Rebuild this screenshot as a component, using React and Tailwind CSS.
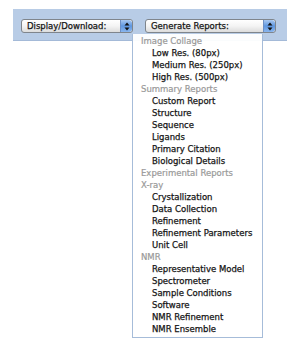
import React from "react";

const menu = [
  { label: "Image Collage", header: true },
  { label: "Low Res. (80px)" },
  { label: "Medium Res. (250px)" },
  { label: "High Res. (500px)" },
  { label: "Summary Reports", header: true },
  { label: "Custom Report" },
  { label: "Structure" },
  { label: "Sequence" },
  { label: "Ligands" },
  { label: "Primary Citation" },
  { label: "Biological Details" },
  { label: "Experimental Reports", header: true },
  { label: "X-ray", header: true },
  { label: "Crystallization" },
  { label: "Data Collection" },
  { label: "Refinement" },
  { label: "Refinement Parameters" },
  { label: "Unit Cell" },
  { label: "NMR", header: true },
  { label: "Representative Model" },
  { label: "Spectrometer" },
  { label: "Sample Conditions" },
  { label: "Software" },
  { label: "NMR Refinement" },
  { label: "NMR Ensemble" },
];

function Stepper() {
  return (
    <span className="flex h-full w-[12px] flex-col items-center justify-center rounded-r-[3px] border-l border-[#6d8fc4] bg-gradient-to-b from-[#a9c8f0] via-[#5f97e0] to-[#8ab6ee]">
      <svg width="6" height="9" viewBox="0 0 6 9">
        <path d="M3 0.5 L5.5 3.5 H0.5 Z" fill="#111" />
        <path d="M3 8.5 L5.5 5.5 H0.5 Z" fill="#111" />
      </svg>
    </span>
  );
}

function Select({ label, width }) {
  return (
    <div
      className={`flex h-[14px] ${width} items-center overflow-hidden rounded-[3px] border border-[#7f858c] bg-gradient-to-b from-white via-[#f4f4f4] to-[#dcdcdc]`}
    >
      <span className="flex-1 pl-[5px] text-[8.5px] leading-none text-[#151515] [-webkit-text-stroke:0.25px_#151515]">
        {label}
      </span>
      <Stepper />
    </div>
  );
}

export default function App() {
  return (
    <div className="relative h-[349px] w-[300px] overflow-hidden bg-white" style={{ fontFamily: '"DejaVu Sans", sans-serif' }}>
      <div className="pt-[9px]">
        <div className="ml-[13px] flex h-[32px] w-[274px] items-start gap-[12px] border-b border-[#a4bad8] bg-[#b8cce6] pl-[8px] pt-[10px]">
          <Select label="Display/Download:" width="w-[112px]" />
          <Select label="Generate Reports:" width="w-[131px]" />
        </div>
      </div>

      {/* open dropdown of Generate Reports */}
      <ul className="absolute left-[132px] top-[34px] w-[131px] border-x border-b border-[#a6bcd9] bg-white/95 pb-[2px] pt-px">
        {menu.map((item, i) => (
          <li
            key={i}
            className={`h-[12px] whitespace-nowrap text-[8.5px] leading-[12px] ${
              item.header
                ? "pl-[8px] text-[#999999] [-webkit-text-stroke:0.2px_#999999]"
                : "pl-[19px] text-[#151515] [-webkit-text-stroke:0.25px_#151515]"
            }`}
          >
            {item.label}
          </li>
        ))}
      </ul>
    </div>
  );
}
